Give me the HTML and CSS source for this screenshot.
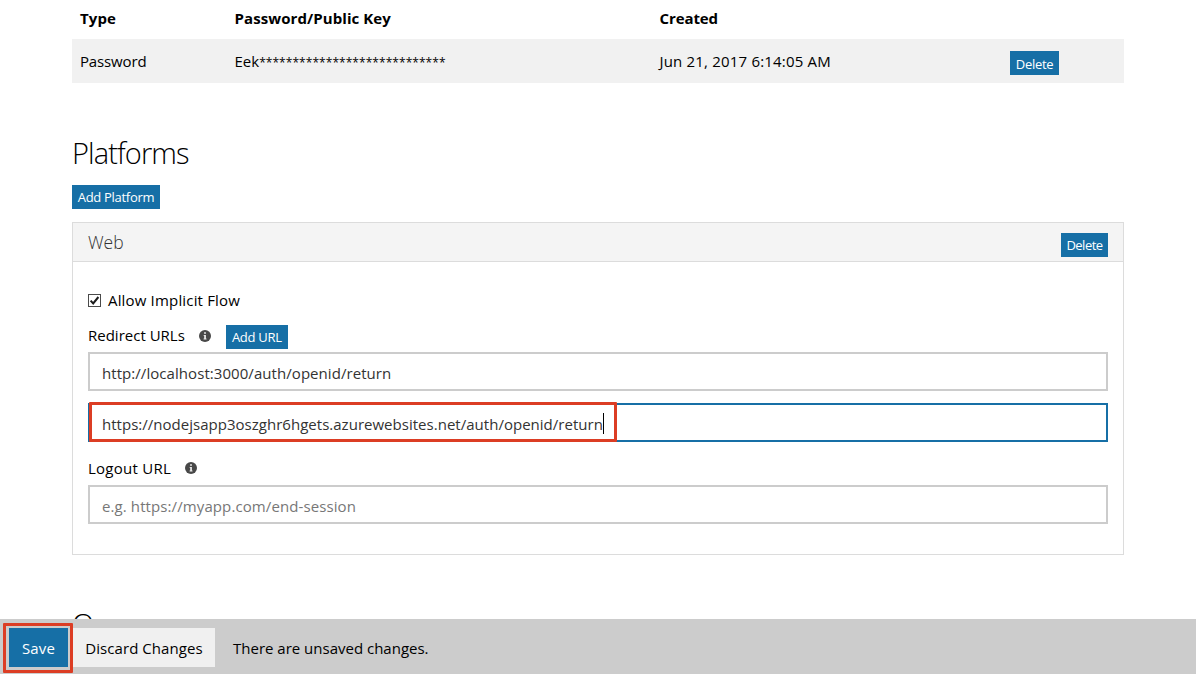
FILE: index.html
```html
<!DOCTYPE html>
<html lang="en">
<head>
<meta charset="utf-8">
<title>Application Registration</title>
<link rel="stylesheet" href="styles.css">
</head>
<body>
<main class="content">
  <div class="secrets">
    <div class="secrets-row secrets-head">
      <span class="key-title">Type</span><span class="key-title">Password/Public Key</span><span class="created-title">Created</span>
    </div>
    <div class="secrets-row secrets-item">
      <span class="type">Password</span>
      <span>Eek<span class="mask">****************************</span></span>
      <span class="date">Jun 21, 2017 6:14:05 AM</span>
      <button class="btn btn-row">Delete</button>
    </div>
  </div>

  <h2 class="section-title">Platforms</h2>
  <button class="btn btn-add">Add Platform</button>

  <section class="panel">
    <header class="panel-head">
      <h3 class="panel-title">Web</h3>
      <button class="btn btn-panel">Delete</button>
    </header>
    <div class="panel-body">
      <label class="check">
        <svg class="check-box" viewBox="0 0 13 13" width="13" height="13"><rect x=".5" y=".5" width="12" height="12" fill="#fff" stroke="#4a4a4a"/><path d="M2.6 6.6 5.2 9.4 10.4 3" fill="none" stroke="#1c1c1c" stroke-width="2"/></svg>
        <span>Allow Implicit Flow</span>
      </label>
      <div class="label-row redirect">
        <span>Redirect URLs</span>
        <svg class="info" viewBox="0 0 12 12" width="12" height="12"><circle cx="6" cy="6" r="6" fill="#484848"/><path d="M5.1 2.3h1.8v1.5H5.1zM4.6 4.9h2.3v3.7h.6v.9H4.6v-.9h.6V5.8h-.6z" fill="#eee"/></svg>
        <button class="btn btn-url">Add URL</button>
      </div>
      <div class="field field-first">http://localhost:3000/auth/openid/return</div>
      <div class="field field-focus">
        <span class="url-long">https://nodejsapp3oszghr6hgets.azurewebsites.net/auth/openid/return</span><i class="caret"></i>
        <div class="mark mark-url"></div>
      </div>
      <div class="label-row logout">
        <span class="logout-text">Logout URL</span>
        <svg class="info" viewBox="0 0 12 12" width="12" height="12"><circle cx="6" cy="6" r="6" fill="#484848"/><path d="M5.1 2.3h1.8v1.5H5.1zM4.6 4.9h2.3v3.7h.6v.9H4.6v-.9h.6V5.8h-.6z" fill="#eee"/></svg>
      </div>
      <div class="field placeholder">e.g. https://myapp.com/end-session</div>
    </div>
  </section>

  <h2 class="section-title next-section">O</h2>
</main>
<footer class="bar">
  <div class="save-wrap"><button class="save">Save</button><div class="mark mark-save"></div></div>
  <button class="discard">Discard Changes</button>
  <span class="status">There are unsaved changes.</span>
</footer>
</body>
</html>
```
FILE: styles.css
```css
* { box-sizing: border-box; }
body {
  margin: 0;
  height: 674px;
  overflow: hidden;
  display: flex;
  flex-direction: column;
  background: #fff;
  color: #000;
  font: 15px/20px "Open Sans", "Noto Sans", sans-serif;
}
button { margin: 0; border: 0; font: inherit; }

.content { height: 619px; padding: 0 72px; overflow: hidden; }

.secrets-row {
  display: grid;
  grid-template-columns: 154.5px 425px 350.5px 1fr;
  padding-left: 8px;
}
.secrets-head { height: 39px; padding-top: 8px; font-weight: 700; }
.key-title { letter-spacing: .08px; }
.created-title { letter-spacing: -.1px; }
.secrets-item { height: 44px; padding-top: 12px; background: #f1f1f1; }
.type { letter-spacing: -.15px; }
.mask { font-size: 12px; letter-spacing: .05px; line-height: 1; }
.date { letter-spacing: .19px; }

.btn {
  height: 24px;
  padding: 0;
  background: #166fa6;
  color: #fff;
  font-size: 13px;
  line-height: 24px;
  letter-spacing: -.3px;
  text-align: center;
  white-space: nowrap;
}
.btn-row { width: 49px; padding-top: 1px; }
.btn-add { display: block; width: 88px; }
.btn-panel { width: 47px; letter-spacing: -.5px; }
.btn-url { width: 62px; margin-left: 15px; }

.section-title {
  margin: 50px 0 12px;
  font-size: 29px;
  font-weight: 300;
  line-height: 40px;
  letter-spacing: -.9px;
}

.panel { height: 333px; margin-top: 13px; border: 1px solid #dcdcdc; }
.panel-head {
  display: flex;
  justify-content: space-between;
  align-items: flex-start;
  height: 39px;
  padding: 10px 15px 0;
  background: #f4f4f4;
  border-bottom: 1px solid #dcdcdc;
}
.panel-title { margin: -2px 0 0; color: #333; font-size: 17.5px; font-weight: 300; line-height: 22px; }
.panel-body { padding: 29px 15px 0; }

.check { display: flex; align-items: center; gap: 7px; height: 18px; letter-spacing: .17px; }
.label-row { display: flex; align-items: center; height: 24px; }
.redirect { margin-top: 16px; }
.redirect > span { padding-bottom: 4px; }
.redirect .info { margin: 0 0 3px 14px; }
.logout { margin: 14px 0 5px; }
.logout-text { letter-spacing: .25px; }
.logout .info { margin-left: 14px; }

.field {
  position: relative;
  display: flex;
  align-items: center;
  height: 39px;
  padding: 3px 12px 0;
  border: 2px solid #ccc;
  color: #333;
  letter-spacing: .06px;
  white-space: nowrap;
}
.field-first { margin: 3px 0 12px; }
.field-focus { border-color: #166fa6; }
.url-long { letter-spacing: .02px; }
.placeholder { color: #777; letter-spacing: .1px; }
.caret { width: 1px; height: 21px; margin-top: -2px; background: #000; }

.mark { position: absolute; border: 3px solid #dc3d24; border-radius: 1px; pointer-events: none; }
.mark-url { left: -1px; top: -3px; width: 528px; height: 40px; }
.mark-save { left: -6px; top: -5px; width: 70px; height: 50px; }

.next-section { margin: 49px 0 0; }

.bar { display: flex; align-items: flex-start; height: 55px; padding: 9px 9px 0; background: #ccc; }
.save-wrap { position: relative; }
.save, .discard { display: block; height: 39px; padding: 2px 0 0; line-height: 37px; }
.save { width: 59px; background: #166fa6; color: #fff; letter-spacing: .15px; }
.discard { width: 142px; margin-left: 5px; background: #f0f0f0; color: #000; letter-spacing: .06px; }
.status { margin: 10px 0 0 18px; }
```
